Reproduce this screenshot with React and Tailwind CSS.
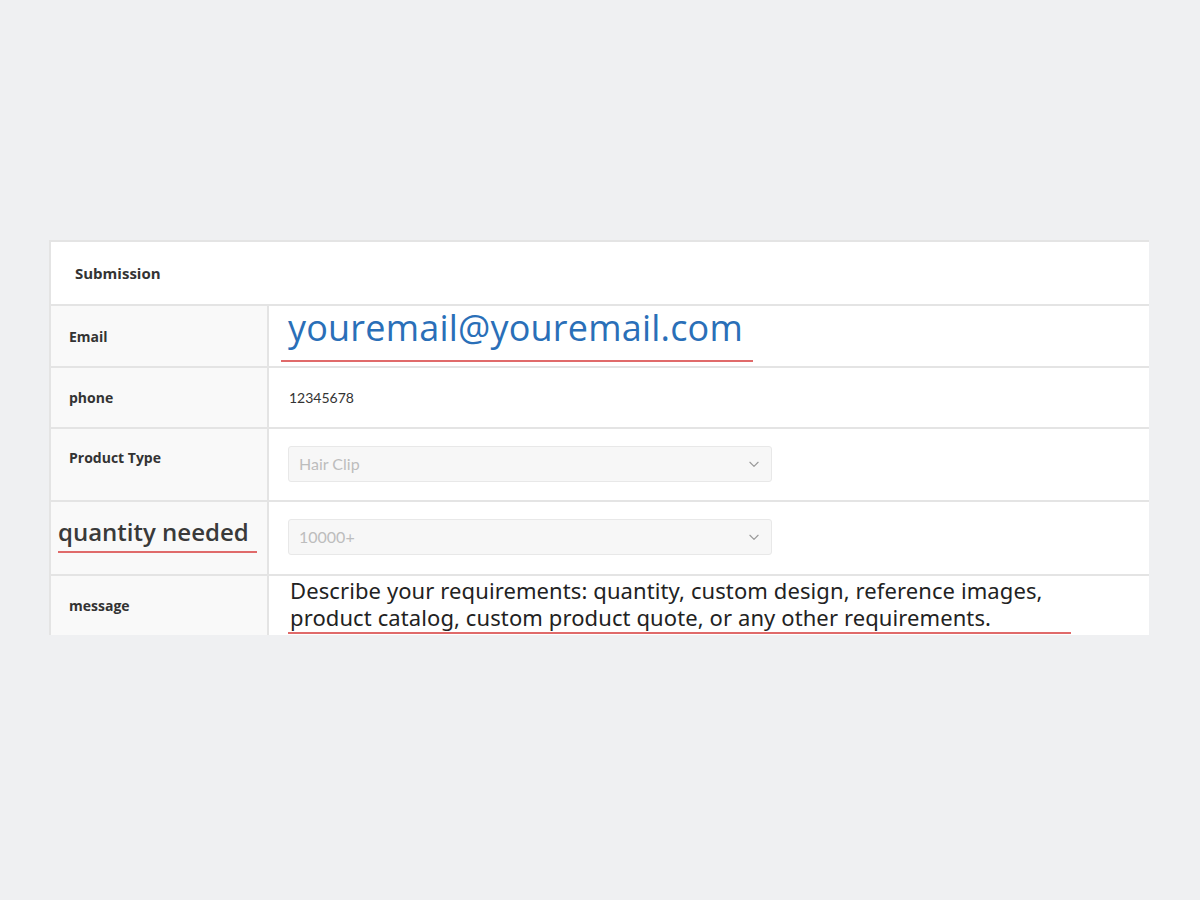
import React from "react";

const Chevron = () => (
  <svg width="14" height="14" viewBox="0 0 24 24" fill="none" stroke="#9a9a9a" strokeWidth="2" strokeLinecap="round" strokeLinejoin="round">
    <path d="M5 9l7 7 7-7" />
  </svg>
);

const Row = ({ label, children, className = "" }) => (
  <div className={"flex border-t-2 border-[#e4e4e4] " + className}>
    <div className="w-[218px] shrink-0 bg-[#f9f9f9] border-r-2 border-[#e4e4e4] flex items-center">{label}</div>
    <div className="flex-1 bg-white flex items-center">{children}</div>
  </div>
);

const Label = ({ children, className = "" }) => (
  <span className={"pl-[18px] text-[14px] font-bold text-[#333] font-['Open_Sans',sans-serif] " + className}>{children}</span>
);

const Select = ({ value }) => (
  <div className="ml-[19px] w-[484px] h-[36px] bg-[#f7f7f7] border border-[#e8e8e8] rounded-[3px] flex items-center justify-between px-[10px] text-[16px] text-[#bdbdbd]">
    <span>{value}</span>
    <Chevron />
  </div>
);

export default function App() {
  return (
    <div className="w-[1200px] h-[900px] bg-[#eff0f2] pt-[240px] pl-[49px] font-['Lato','Open_Sans',sans-serif]">
      <div className="w-[1100px] border-2 border-b-0 border-r-0 border-[#e4e4e4] bg-white">
        <div className="h-[62px] flex items-center pl-[24px] text-[15px] font-bold text-[#333] font-['Open_Sans',sans-serif]">Submission</div>
        <Row className="h-[62px]" label={<Label>Email</Label>}>
          <div className="ml-[12px] relative">
            <span className="pl-[7px] text-[36px] text-[#2a6fb8] font-['Open_Sans',sans-serif] leading-none block -mt-[16px] tracking-[0.2px]">youremail@youremail.com</span>
            <div className="absolute left-0 w-[472px] h-[2px] bg-[#e06a6a] top-[34px]" />
          </div>
        </Row>
        <Row className="h-[61px]" label={<Label>phone</Label>}>
          <span className="pl-[20px] text-[14px] text-[#333]">12345678</span>
        </Row>
        <Row className="h-[73px] items-stretch" label={<Label className="self-start mt-[18px]">Product Type</Label>}>
          <div className="-mt-[2px]"><Select value="Hair Clip" /></div>
        </Row>
        <Row className="h-[74px]" label={
          <div className="pl-[7px] -mt-[10px]">
            <span className="text-[24px] font-semibold text-[#3a3a3a] font-['Open_Sans',sans-serif]">quantity needed</span>
            <div className="w-[199px] h-[2px] bg-[#e06a6a] mt-[1px]" />
          </div>
        }>
          <div className="-mt-[2px]"><Select value="10000+" /></div>
        </Row>
        <Row className="h-[61px]" label={<Label>message</Label>}>
          <div className="pl-[21px] mt-[0px]">
            <p className="text-[22px] leading-[27px] text-[#222] font-['Noto_Sans',sans-serif] tracking-[0.1px]">
              Describe your requirements: quantity, custom design, reference images,<br />
              product catalog, custom product quote, or any other requirements.
            </p>
            <div className="w-[783px] h-[2px] bg-[#e06a6a] -ml-[2px] mt-[1px]" />
          </div>
        </Row>
      </div>
    </div>
  );
}
